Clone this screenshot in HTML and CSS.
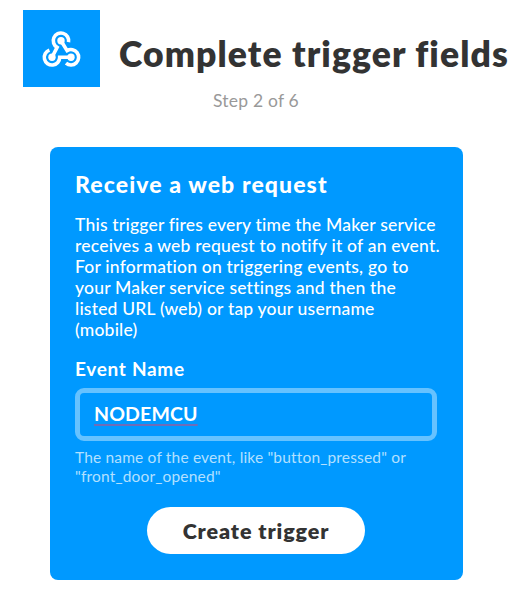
FILE: index.html
```html
<!DOCTYPE html>
<html lang="en">
  <head>
    <meta charset="UTF-8">
    <title>Complete trigger fields</title>
    <link rel="stylesheet" href="styles.css">
</head>
<body>

<div class="header">
  <div class="logo">
    <svg width="77" height="77" viewBox="0 0 77 77" fill="none" stroke="#fff" stroke-width="3.6">
      <path d="M45.5 32.2 A7.7 7.7 0 1 0 34.1 37.4 L29 47.3"/>
      <path d="M26.4 40.1 A7.7 7.7 0 1 0 36.7 47.3 L48 47.3"/>
      <path d="M43 53.2 A7.7 7.7 0 1 0 44.1 40.6 L38 30.7"/>
      <g fill="#fff" stroke="none">
        <circle cx="38" cy="30.7" r="3.7"/>
        <circle cx="29" cy="47.3" r="3.7"/>
        <circle cx="48" cy="47.3" r="3.7"/>
      </g>
    </svg>
  </div>
  <h1 class="title">Complete trigger fields</h1>
</div>
<div class="step">Step 2 of 6</div>

<div class="card">
  <h2 class="card-title">Receive a web request</h2>
  <p class="description">
    This trigger fires every time the Maker service<br>
    receives a web request to notify it of an event.<br>
    For information on triggering events, go to<br>
    your Maker service settings and then the<br>
    listed URL (web) or tap your username<br>
    (mobile)
  </p>
  <div class="label">Event Name</div>
  <div class="field"><span class="value">NODEMCU</span></div>
  <p class="hint">
    The name of the event, like "button_pressed" or<br>
    "front_door_opened"
  </p>
  <button class="create">Create trigger</button>
</div>

</body>
</html>
```
FILE: styles.css
```css
* {
  box-sizing: border-box;
}

body {
  margin: 0;
  padding-top: 10px;
  background-color: #fff;
  font-family: Lato, "Open Sans", sans-serif;
  font-variant-ligatures: none;
  white-space: nowrap;
}

h1, h2, p {
  margin: 0;
}

.header {
  display: flex;
  height: 77px;
  padding-left: 23px;
}

.logo {
  width: 77px;
  height: 77px;
  background-color: #0099ff;
}

.title {
  margin-left: 19px;
  padding-top: 23px;
  font-size: 35.5px;
  line-height: 42px;
  font-weight: 800;
  letter-spacing: 1.1px;
  color: #333;
}

.step {
  width: 512px;
  margin-top: 3px;
  text-align: center;
  font-size: 17.5px;
  line-height: 21px;
  letter-spacing: 0.2px;
  color: #999;
}

.card {
  display: flex;
  flex-direction: column;
  width: 413px;
  height: 433px;
  margin: 36px 0 0 50px;
  padding: 23px 26px 0 25px;
  border-radius: 8px;
  background-color: #0099ff;
  color: #fff;
}

.card-title {
  font-size: 23px;
  line-height: 28px;
  font-weight: 900;
  letter-spacing: 1.1px;
}

.description {
  margin-top: 16px;
  font-size: 17.5px;
  line-height: 21px;
  font-weight: 500;
  letter-spacing: 0.2px;
}

.label {
  margin-top: 17px;
  font-size: 19px;
  line-height: 24px;
  font-weight: 700;
  letter-spacing: 0.7px;
}

.field {
  height: 53px;
  margin-top: 7px;
  padding: 9px 14px;
  border: 5px solid #66c2ff;
  border-radius: 9px;
  font-size: 19.5px;
  line-height: 24px;
  font-weight: 700;
  letter-spacing: 0.15px;
}

.value {
  text-decoration: underline #6f6cb8 2px;
  text-decoration-skip-ink: none;
  text-underline-offset: 3px;
}

.hint {
  margin-top: 7px;
  font-size: 15.5px;
  line-height: 18.5px;
  letter-spacing: 0.17px;
  color: #b3e0ff;
}

.create {
  align-self: center;
  width: 218px;
  height: 47px;
  margin-top: 22px;
  border: none;
  border-radius: 24px;
  background-color: #fff;
  font-family: inherit;
  font-size: 21.5px;
  font-weight: 800;
  letter-spacing: 0.9px;
  color: #333;
}
```
